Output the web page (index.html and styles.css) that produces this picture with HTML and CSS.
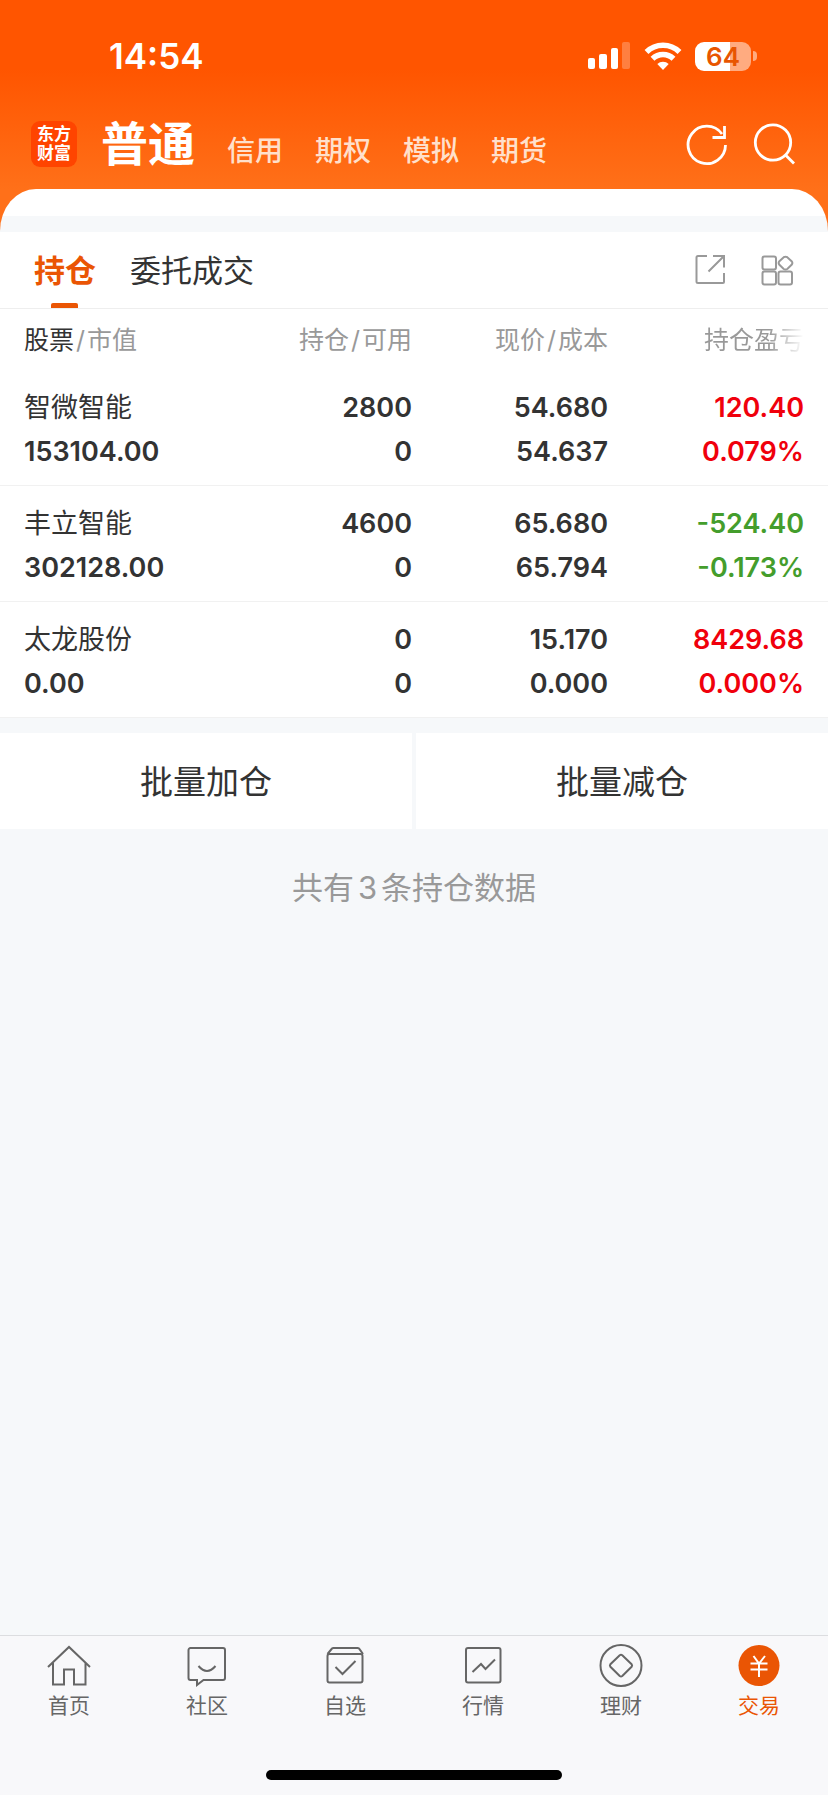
FILE: index.html
```html
<!DOCTYPE html>
<html lang="zh-CN">
<head>
  <meta charset="UTF-8" />
  <meta name="viewport" content="width=device-width, initial-scale=1.0">
  <title>持仓</title>
  <link rel="stylesheet" href="styles.css">
</head>
<body>
  <header class="header">
    <div class="status-bar">
      <div class="time">14:54</div>
      <div class="status-icons">
        <svg width="43" height="30" viewBox="0 0 43 30" fill="#fff">
          <rect x="0" y="17" width="7" height="11" rx="2" />
          <rect x="11" y="13" width="8" height="15" rx="2" />
          <rect x="23" y="7" width="7" height="21" rx="2" />
          <rect x="34" y="1" width="8" height="27" rx="2" opacity="0.25" />
        </svg>
        <svg width="38" height="30" viewBox="0 0 38 30" fill="none" stroke="#fff" stroke-width="5.500">
          <path d="M2.500 11a23.500 23.500 0 0 1 33 0" />
          <path d="M8.500 17.800a15 15 0 0 1 21 0" />
          <path d="M19 29l-5.700-5.900a8.200 8.200 0 0 1 11.400 0z" fill="#fff" stroke="none" />
        </svg>
        <div class="battery"><span class="battery-level">64</span><span class="battery-cap"></span></div>
      </div>
    </div>

    <div class="top-bar">
      <div class="logo">东方<br>财富</div>
      <nav class="accounts">
        <a class="account active" href="#">普通</a>
        <a class="account" href="#">信用</a>
        <a class="account" href="#">期权</a>
        <a class="account" href="#">模拟</a>
        <a class="account" href="#">期货</a>
      </nav>
      <button class="icon-btn" aria-label="刷新">
        <svg width="44" height="44" viewBox="0 0 44 44" fill="none" stroke="#fff" stroke-width="2.800">
          <path d="M40.500 23A18.700 18.700 0 1 1 37 12" />
          <path d="M39.500 4v11.500H27.500" />
        </svg>
      </button>
      <button class="icon-btn" aria-label="搜索">
        <svg width="44" height="44" viewBox="0 0 44 44" fill="none" stroke="#fff" stroke-width="2.800">
          <circle cx="20" cy="20.500" r="17.700" />
          <path d="M32.500 33l8.500 8.500" />
        </svg>
      </button>
    </div>
  </header>

  <main class="sheet">
    <div class="tabs">
      <button class="tab active">持仓</button>
      <button class="tab">委托成交</button>
      <button class="tool-btn first-tool" aria-label="分享">
        <svg width="34" height="34" viewBox="0 0 34 34" fill="none" stroke="#999" stroke-width="2">
          <path d="M14 3H5a1.500 1.500 0 0 0-1.500 1.500v24A1.500 1.500 0 0 0 5 30h25a1 1 0 0 0 1-1V20" />
          <path d="M20 3h11v11.500M31 3L15.500 18.500" />
        </svg>
      </button>
      <button class="tool-btn" aria-label="更多">
        <svg width="34" height="34" viewBox="0 0 34 34" fill="none" stroke="#999" stroke-width="2">
          <rect x="2.500" y="3.500" width="13.500" height="13" rx="2" />
          <rect x="2.500" y="18.500" width="13.500" height="13" rx="2" />
          <rect x="18.500" y="18.500" width="13.500" height="13" rx="2" />
          <path d="M23.700 4.200q1.800-1 3.600 0l4.300 4q1.500 1.800 0 3.600l-4.300 4.200q-1.800 1-3.600 0l-4.300-4.200q-1.500-1.800 0-3.600z" />
        </svg>
      </button>
    </div>

    <table class="positions">
      <colgroup>
        <col>
        <col class="col-num">
        <col class="col-num">
        <col class="col-profit">
      </colgroup>
      <thead>
        <tr>
          <th><span class="dark">股票</span><span class="slash">/</span>市值</th>
          <th>持仓<span class="slash">/</span>可用</th>
          <th>现价<span class="slash">/</span>成本</th>
          <th><span class="fade">持仓盈亏</span></th>
        </tr>
      </thead>
      <tbody>
        <tr>
          <td><span class="name">智微智能</span><span>153104.00</span></td>
          <td><span>2800</span><span>0</span></td>
          <td><span>54.680</span><span>54.637</span></td>
          <td class="up"><span>120.40</span><span>0.079%</span></td>
        </tr>
        <tr>
          <td><span class="name">丰立智能</span><span>302128.00</span></td>
          <td><span>4600</span><span>0</span></td>
          <td><span>65.680</span><span>65.794</span></td>
          <td class="down"><span>-524.40</span><span>-0.173%</span></td>
        </tr>
        <tr>
          <td><span class="name">太龙股份</span><span>0.00</span></td>
          <td><span>0</span><span>0</span></td>
          <td><span>15.170</span><span>0.000</span></td>
          <td class="up"><span>8429.68</span><span>0.000%</span></td>
        </tr>
      </tbody>
    </table>

    <div class="batch">
      <button class="batch-btn">批量加仓</button>
      <button class="batch-btn">批量减仓</button>
    </div>

    <p class="total">共有<span class="count">3</span>条持仓数据</p>
  </main>

  <footer class="footer">
    <nav class="tab-bar">
      <a class="tab-item" href="#">
        <svg width="44" height="44" viewBox="0 0 44 44">
          <path d="M1 24L22 4l21 20M6 20v21.500h11V26.500h10v15h11.500V20" />
        </svg>
        首页
      </a>
      <a class="tab-item" href="#">
        <svg width="44" height="44" viewBox="0 0 44 44">
          <path d="M5.500 5h32.500a2 2 0 0 1 2 2v28a2 2 0 0 1-2 2H18.500l-6.500 5v-5H5.500a2 2 0 0 1-2-2V7a2 2 0 0 1 2-2z" />
          <path d="M13.500 23q8.500 10 17 0" />
        </svg>
        社区
      </a>
      <a class="tab-item" href="#">
        <svg width="44" height="44" viewBox="0 0 44 44">
          <path d="M4.500 11l4.500-5.500q.500-.500 1.500-.500h24q1 0 1.500.500L40 11" />
          <rect x="4.500" y="11" width="35" height="28.500" rx="2" />
          <path d="M12.500 24l7 7L32.500 18" />
        </svg>
        自选
      </a>
      <a class="tab-item" href="#">
        <svg width="44" height="44" viewBox="0 0 44 44">
          <rect x="5" y="5" width="34.500" height="34.500" rx="2" />
          <path d="M11.500 29l8.500-8 4.500 5L34 16.500" />
        </svg>
        行情
      </a>
      <a class="tab-item" href="#">
        <svg width="44" height="44" viewBox="0 0 44 44">
          <circle cx="22" cy="22.500" r="20.500" />
          <path d="M20.700 12.200q1.300-1 2.600 0l9.300 9q1 1.300 0 2.600l-9.300 9.200q-1.300 1-2.600 0l-9.300-9.200q-1-1.300 0-2.600z" />
        </svg>
        理财
      </a>
      <a class="tab-item active" href="#">
        <svg width="44" height="44" viewBox="0 0 44 44">
          <circle class="coin" cx="22" cy="22.500" r="20.500" />
          <path class="yen" d="M16.500 13L22 20.500 28 13M22 20.500V34M13.500 20.500h17M13.500 26.500h17" />
        </svg>
        交易
      </a>
    </nav>
    <div class="home-indicator"></div>
  </footer>
</body>
</html>
```
FILE: styles.css
```css
* {
  box-sizing: border-box;
}

body {
  margin: 0;
  min-height: 100vh;
  display: flex;
  flex-direction: column;
  background: #f6f8fa;
  color: #333;
  font-family: Inter, "Noto Sans CJK SC", sans-serif;
}

button {
  border: none;
  background: none;
  padding: 0;
  color: inherit;
  font-family: inherit;
  cursor: pointer;
}

a {
  color: inherit;
  text-decoration: none;
}

svg {
  display: block;
}

/* header */
.header {
  background: linear-gradient(#ff5500 30%, #ff7019 82%);
  color: #fff;
  padding: 36px 31px 53px;
}

.status-bar {
  display: flex;
  justify-content: space-between;
  align-items: center;
  height: 40px;
  padding: 0 40px 0 78px;
}

.time {
  font-size: 35px;
  font-weight: 600;
}

.status-icons {
  display: flex;
  align-items: center;
  gap: 13px;
}

.battery {
  display: flex;
  align-items: center;
  gap: 2px;
}

.battery-level {
  width: 56px;
  height: 29px;
  border-radius: 9px;
  background: linear-gradient(90deg, #fff 63%, #ffab80 63%);
  color: #e85500;
  font-size: 26px;
  font-weight: 600;
  line-height: 29px;
  text-align: center;
}

.battery-cap {
  width: 4px;
  height: 10px;
  border-radius: 0 5px 5px 0;
  background: #ffab80;
}

.top-bar {
  display: flex;
  align-items: center;
  height: 68px;
  margin-top: 34px;
}

.logo {
  width: 46px;
  height: 46px;
  padding-top: 4px;
  border-radius: 9px;
  background: #ff4400;
  font-size: 17px;
  font-weight: 700;
  line-height: 19px;
  text-align: center;
}

.accounts {
  flex: 1;
  display: flex;
  align-items: baseline;
  gap: 32px;
  padding: 6px 0 0 24px;
}

.account {
  font-size: 28px;
  font-weight: 500;
  line-height: 68px;
  color: #ffe0cc;
}

.account.active {
  font-size: 47px;
  font-weight: 700;
  color: #fff;
}

.icon-btn {
  margin-left: 24px;
}

/* sheet */
.sheet {
  margin-top: -42px;
  padding-top: 27px;
  border-radius: 36px 36px 0 0 / 42px 42px 0 0;
  overflow: hidden;
  background: linear-gradient(#fff 27px, #f6f8fa 27px);
}

.tabs {
  display: flex;
  align-items: center;
  height: 77px;
  margin-top: 16px;
  padding: 0 34px;
  border-bottom: 1px solid #eee;
  background: #fff;
}

.tab {
  position: relative;
  height: 76px;
  padding-bottom: 4px;
  margin-right: 34px;
  font-size: 31px;
}

.tab.active {
  color: #ea5504;
  font-weight: 700;
}

.tab.active::after {
  content: "";
  position: absolute;
  left: 50%;
  bottom: 0;
  width: 27px;
  height: 5px;
  margin-left: -14px;
  border-radius: 2px 2px 0 0;
  background: #ea5504;
}

.tool-btn {
  margin-left: 33px;
}

.first-tool {
  margin-left: auto;
}

.positions {
  width: 100%;
  table-layout: fixed;
  border-collapse: collapse;
  background: #fff;
}

.col-num {
  width: 196px;
}

.col-profit {
  width: 220px;
}

.positions th {
  height: 61px;
  padding: 0 0 4px;
  color: #999;
  font-size: 25px;
  font-weight: 400;
  text-align: right;
}

.positions td {
  padding: 16px 0 11px;
  border-bottom: 1px solid #f1f1f1;
  font-size: 27px;
  font-weight: 600;
  line-height: 44px;
  text-align: right;
}

.positions td span {
  display: block;
}

.positions th:first-child,
.positions td:first-child {
  padding-left: 24px;
  text-align: left;
}

.positions th:last-child,
.positions td:last-child {
  padding-right: 24px;
}

.positions .name {
  font-weight: 400;
}

.dark {
  color: #333;
}

.slash {
  margin: 0 2px;
}

.fade {
  background: linear-gradient(90deg, #999 65%, #fff);
  -webkit-background-clip: text;
  background-clip: text;
  color: transparent;
}

.positions .up {
  color: #f0000c;
}

.positions .down {
  color: #449d2c;
}

.batch {
  display: flex;
  gap: 4px;
  margin-top: 15px;
}

.batch-btn {
  flex: 1;
  height: 96px;
  padding-bottom: 2px;
  background: #fff;
  font-size: 33px;
}

.total {
  margin: 35px 0;
  color: #999;
  font-size: 31px;
  line-height: 48px;
  text-align: center;
}

.count {
  margin: 0 4px;
}

/* bottom bar */
.footer {
  margin-top: auto;
  border-top: 1px solid #dcdde0;
  background: #f8f8fa;
  padding-bottom: 15px;
}

.tab-bar {
  display: flex;
  padding-top: 7px;
}

.tab-item {
  flex: 1;
  display: flex;
  flex-direction: column;
  align-items: center;
  gap: 3px;
  color: #666;
  font-size: 21px;
  line-height: 32px;
}

.tab-item svg {
  fill: none;
  stroke: #666;
  stroke-width: 2;
}

.tab-item.active {
  color: #ea5504;
}

.tab-item .coin {
  fill: #ea5504;
  stroke: none;
}

.tab-item .yen {
  stroke: #fff;
  stroke-width: 2;
}

.home-indicator {
  width: 296px;
  height: 10px;
  margin: 48px auto 0;
  border-radius: 5px;
  background: #000;
}
```
